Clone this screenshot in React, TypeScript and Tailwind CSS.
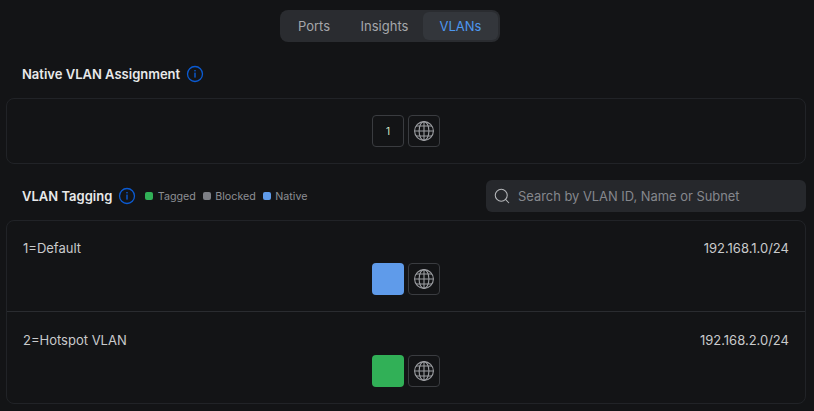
import React from 'react';
import { Search } from 'lucide-react';

const font = "font-['Inter','Noto_Sans',sans-serif]";

const InfoIcon: React.FC = () => (
  <svg width="18" height="18" viewBox="0 0 18 18" fill="none" className="shrink-0">
    <circle cx="9" cy="9" r="7.5" stroke="#0b5bd3" strokeWidth="1.3" />
    <rect x="8.3" y="7.6" width="1.4" height="5" fill="#0b5bd3" />
    <rect x="8.3" y="5" width="1.4" height="1.4" fill="#0b5bd3" />
  </svg>
);

const GlobeIcon: React.FC = () => (
  <svg width="20" height="20" viewBox="0 0 20 20" fill="none" stroke="#9c9ea2" strokeWidth="1.1">
    <circle cx="10" cy="10" r="9.4" />
    <ellipse cx="10" cy="10" rx="4.9" ry="9.4" />
    <path d="M10 .6v18.8M.6 10h18.8M2 5h16M2 15h16" />
  </svg>
);

const GlobeButton: React.FC = () => (
  <div className="w-8 h-8 rounded border border-[#3a3c40] flex items-center justify-center">
    <GlobeIcon />
  </div>
);

const Legend: React.FC<{ color: string; label: string }> = ({ color, label }) => (
  <div className="flex items-center gap-[4.5px]">
    <span className={`w-2 h-2 rounded-[2px] ${color}`} />
    <span className="text-[10.7px] leading-4 pt-[2px] text-[#8d8f94]">{label}</span>
  </div>
);

const VlanRow: React.FC<{ name: string; subnet: string; color: string; rowClass: string }> = ({
  name,
  subnet,
  color,
  rowClass,
}) => (
  <div className={`flex flex-col ${rowClass}`}>
    <div className="flex justify-between items-center h-4 px-4 text-[13px] text-[#c9cacc]">
      <span>{name}</span>
      <span>{subnet}</span>
    </div>
    <div className="flex justify-center gap-1 mt-[6px]">
      <div className={`w-8 h-8 rounded ${color}`} />
      <GlobeButton />
    </div>
  </div>
);

const App: React.FC = () => {
  return (
    <div className={`w-[814px] h-[411px] overflow-hidden bg-[#131416] ${font}`}>
      <div className="flex pl-[280px] pt-[10px]">
        <div className="w-[220px] h-8 p-[2px] rounded-lg bg-[#2a2c30] flex items-center text-[13px] text-[#a5a7ab]">
          <span className="w-[64px] text-center pt-[2px]">Ports</span>
          <span className="w-[77px] text-center pt-[2px]">Insights</span>
          <span className="w-[75px] h-7 pt-[2px] rounded-md bg-[#33363b] text-[#4d97f0] flex items-center justify-center">
            VLANs
          </span>
        </div>
      </div>

      <div className="flex items-center gap-[6px] h-[18px] mt-[23px] pl-[22px]">
        <span className="text-[13px] pt-[2px] font-semibold text-[#e8e9ea]">Native VLAN Assignment</span>
        <InfoIcon />
      </div>

      <div className="ml-[6px] w-[800px] mt-[15px] h-[66px] rounded-lg border border-[#212327] flex justify-center items-center gap-1">
        <div className="w-8 h-8 rounded border border-[#3a3c40] flex items-center justify-center text-[10px] text-[#d8ead0]">
          1
        </div>
        <GlobeButton />
      </div>

      <div className="flex items-center justify-between mt-4 pl-[22px] pr-2">
        <div className="flex items-center">
          <span className="text-[13px] pt-[2px] font-semibold text-[#e8e9ea]">VLAN Tagging</span>
          <div className="ml-[6px]">
            <InfoIcon />
          </div>
          <div className="flex items-center gap-[7px] ml-[9px]">
            <Legend color="bg-[#31b057]" label="Tagged" />
            <Legend color="bg-[#7d7f85]" label="Blocked" />
            <Legend color="bg-[#5f9bea]" label="Native" />
          </div>
        </div>
        <div className="w-[320px] h-8 rounded-md bg-[#26282c] flex items-center gap-[7px] pl-[7px]">
          <Search size={18} strokeWidth={1.4} className="text-[#b5b7ba]" />
          <span className="text-[12.9px] pt-[2px] text-[#85878c]">Search by VLAN ID, Name or Subnet</span>
        </div>
      </div>

      <div className="ml-[6px] w-[800px] mt-2 h-[184px] rounded-lg border border-[#212327]">
        <VlanRow
          name="1=Default"
          subnet="192.168.1.0/24"
          color="bg-[#5f9bea]"
          rowClass="h-[91px] pt-5 border-b border-[#2a2c30]"
        />
        <VlanRow name="2=Hotspot VLAN" subnet="192.168.2.0/24" color="bg-[#31b057]" rowClass="pt-[21px]" />
      </div>
    </div>
  );
};

export default App;
